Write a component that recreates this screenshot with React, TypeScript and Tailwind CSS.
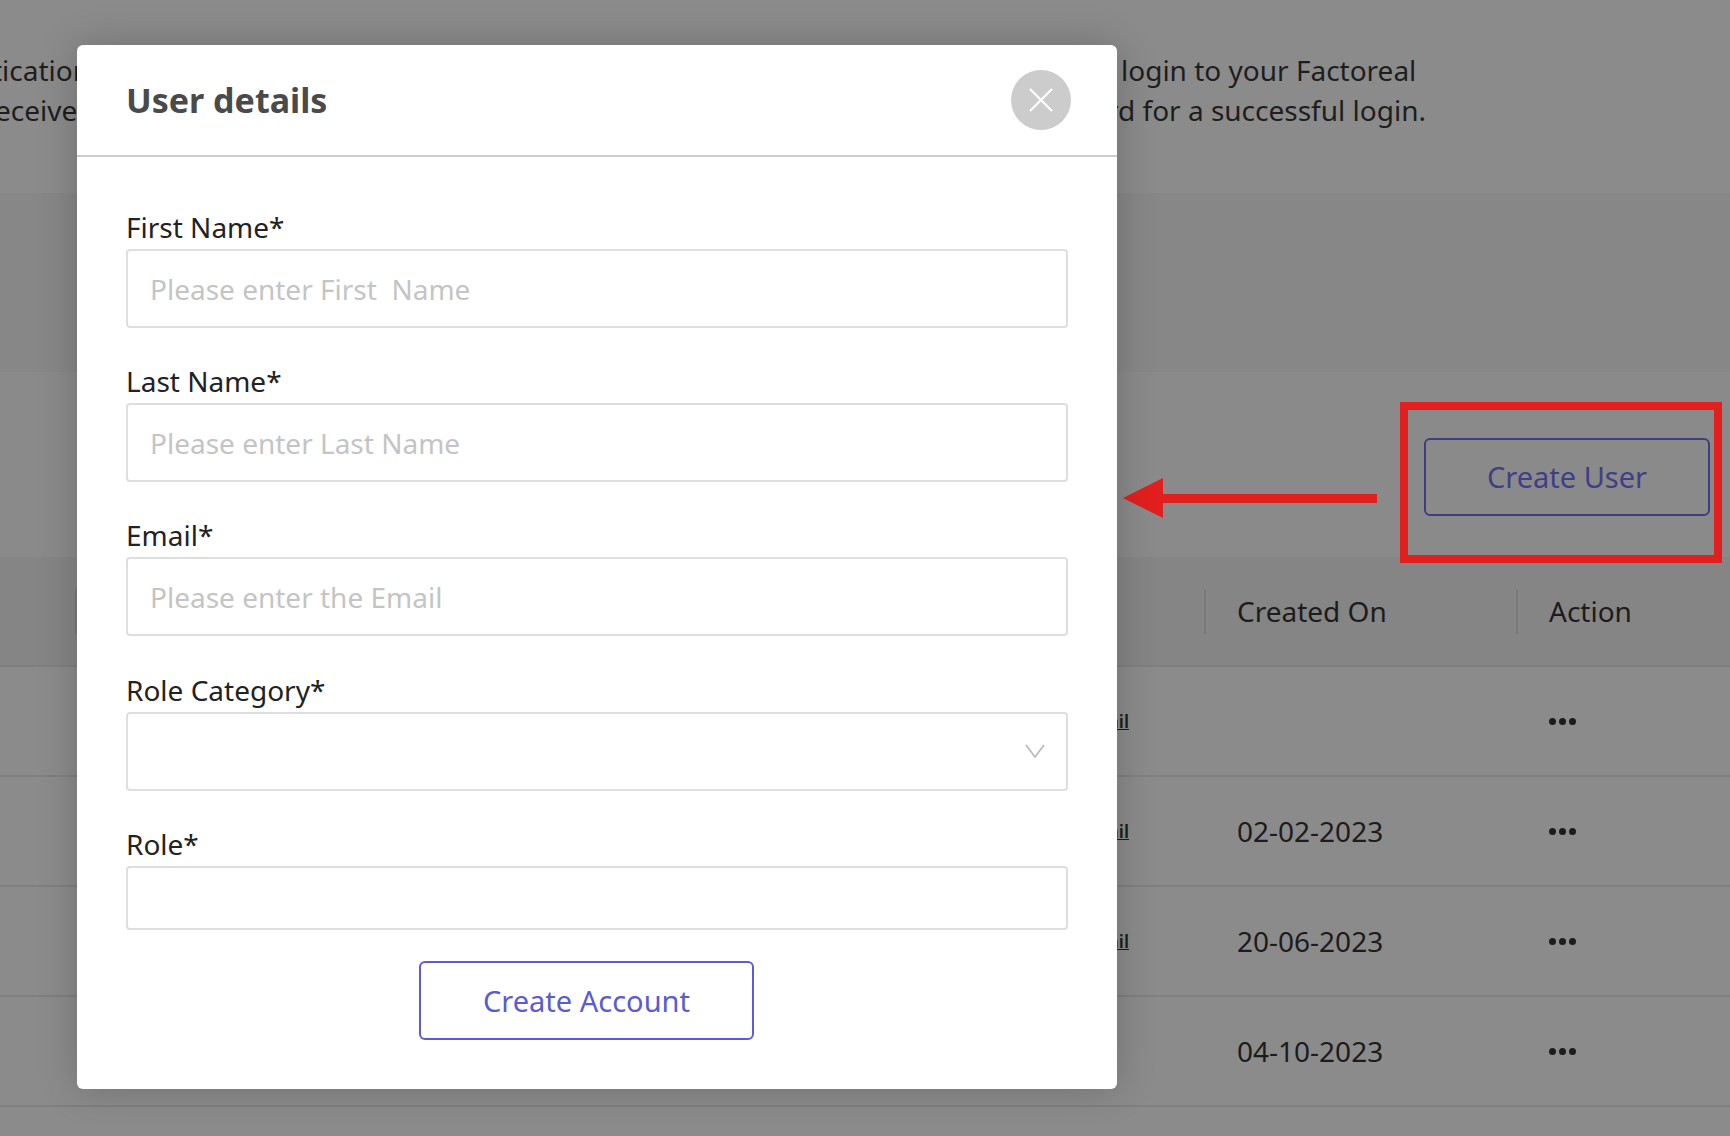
import { ReactNode } from "react";

interface FieldProps {
  label: string;
  placeholder?: string;
  height?: string;
  select?: boolean;
}

function Field({ label, placeholder, height = "h-[79px]", select }: FieldProps) {
  return (
    <div className="mb-[35.2px]">
      <label className="block text-[28px] leading-[36px] text-[#222222] mb-[4px]">{label}</label>
      <div
        className={`${height} relative flex items-center border-2 border-[#dedede] rounded-[4px] pl-[22px] text-[28px] text-[#c4c4c4] whitespace-pre`}
      >
        {placeholder}
        {select && (
          <svg className="absolute right-[21px] top-1/2 -translate-y-1/2" width="20" height="14" viewBox="0 0 20 14" fill="none">
            <path d="M1 1l9 12 9-12" stroke="#b8b8b8" strokeWidth="1.6" />
          </svg>
        )}
      </div>
    </div>
  );
}

function Dots() {
  return (
    <div className="flex gap-[3px]">
      <span className="w-[7px] h-[7px] rounded-full bg-[#1c1c1c]" />
      <span className="w-[7px] h-[7px] rounded-full bg-[#1c1c1c]" />
      <span className="w-[7px] h-[7px] rounded-full bg-[#1c1c1c]" />
    </div>
  );
}

function Row({ date, link = true }: { date?: string; link?: boolean }) {
  return (
    <div className="h-[110px] flex items-center border-b-2 border-[#7f7f7f]">
      <div className="w-[1204px] shrink-0 flex justify-end pr-[75px]">
        {link && <span className="text-[18px] font-semibold underline text-[#1c1c1c]">Detail</span>}
      </div>
      <div className="w-[312px] shrink-0 pl-[33px] text-[28px] text-[#1c1c1c]">{date}</div>
      <div className="pl-[33px]">
        <Dots />
      </div>
    </div>
  );
}

function HeaderCell({ children, width }: { children?: ReactNode; width: string }) {
  return (
    <div className={`${width} shrink-0 flex items-center h-[45px] border-l-2 border-[#7a7a7a] pl-[31px]`}>
      {children}
    </div>
  );
}

export default function App() {
  return (
    <div
      className="relative w-[1730px] h-[1136px] overflow-hidden bg-[#8b8b8b] text-[#1c1c1c]"
      style={{ fontFamily: '"Noto Sans", "Open Sans", sans-serif' }}
    >
      {/* page behind the overlay */}
      <div className="h-[193px] pt-[50px] text-[28px] leading-[40px] text-[#1e1e1e]">
        <div className="flex whitespace-nowrap">
          <span className="w-[1129px] shrink-0 -ml-[8px]">tication</span>
          <span>login to your Factoreal</span>
        </div>
        <div className="flex whitespace-nowrap">
          <span className="w-[1112px] shrink-0 -ml-[5px]">eceive</span>
          <span>rd for a successful login.</span>
        </div>
      </div>
      <div className="h-[179px] bg-[#878787]" />
      <div className="h-[185px] bg-[#8a8a8a] flex items-center justify-end pr-[20px] pt-[25px]">
        <button className="w-[286px] h-[78px] border-2 border-[#3d3d82] rounded-[6px] text-[29px] text-[#3f3f88]">
          Create User
        </button>
      </div>
      <div className="h-[110px] bg-[#858585] flex items-center border-b-2 border-[#7f7f7f] text-[28px]">
        <div className="w-[75px] shrink-0" />
        <HeaderCell width="w-[1129px]" />
        <HeaderCell width="w-[312px]">Created On</HeaderCell>
        <HeaderCell width="w-[214px]">Action</HeaderCell>
      </div>
      <Row />
      <Row date="02-02-2023" />
      <Row date="20-06-2023" />
      <Row date="04-10-2023" link={false} />
      <div className="h-[110px]" />

      {/* annotation */}
      <svg className="absolute left-0 top-0 pointer-events-none" width="1730" height="1136">
        <rect x="1404" y="406" width="314" height="153" fill="none" stroke="#e11f1f" strokeWidth="8" />
        <rect x="1160" y="494" width="217" height="9" fill="#e11f1f" />
        <polygon points="1123,498 1163,478 1163,518" fill="#e11f1f" />
      </svg>

      {/* modal */}
      <div className="absolute left-[77px] top-[45px] w-[1040px] bg-white rounded-[6px] shadow-[0_0_40px_rgba(0,0,0,0.2)]">
        <div className="h-[112px] flex items-center justify-between pl-[49px] pr-[46px] border-b-2 border-[#cccccc]">
          <h2 className="text-[34px] font-bold text-[#4a4a4a]">User details</h2>
          <button className="w-[60px] h-[60px] rounded-full bg-[#cccccc] flex items-center justify-center">
            <svg width="24" height="24" viewBox="0 0 24 24" fill="none">
              <path d="M1 1l22 22M23 1L1 23" stroke="white" strokeWidth="2.2" />
            </svg>
          </button>
        </div>
        <div className="pt-[52px] px-[49px] pb-[49px]">
          <Field label="First Name*" placeholder="Please enter First  Name" />
          <Field label="Last Name*" placeholder="Please enter Last Name" />
          <Field label="Email*" placeholder="Please enter the Email" />
          <Field label="Role Category*" select />
          <div>
            <label className="block text-[28px] leading-[36px] text-[#222222] mb-[4px]">Role*</label>
            <div className="h-[64px] border-2 border-[#dedede] rounded-[4px]" />
          </div>
          <div className="mt-[31px] pl-[293px]">
            <button className="w-[335px] h-[79px] border-2 border-[#5c5cd8] rounded-[6px] text-[29px] text-[#5a5ad4]">
              Create Account
            </button>
          </div>
        </div>
      </div>
    </div>
  );
}
